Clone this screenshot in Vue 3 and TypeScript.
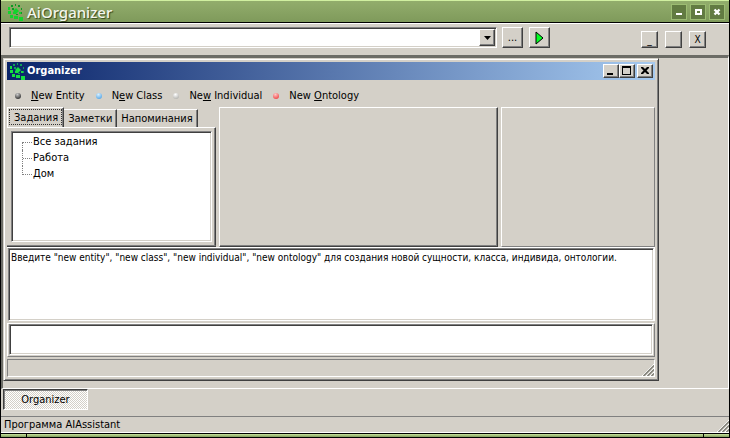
<script setup lang="ts">
import { ref } from 'vue'

interface MenuEntry { before: string; key: string; after: string; tone: string }

const entries: MenuEntry[] = [
  { before: '', key: 'N', after: 'ew Entity', tone: 'dark' },
  { before: 'N', key: 'e', after: 'w Class', tone: 'blue' },
  { before: 'Ne', key: 'w', after: ' Individual', tone: 'pale' },
  { before: 'New ', key: 'O', after: 'ntology', tone: 'red' },
]
const tabs: string[] = ['Задания', 'Заметки', 'Напоминания']
const activeTab = ref(0)
const tasks: string[] = ['Все задания', 'Работа', 'Дом']
const address = ref('')
const command = ref('')
const log = ref('Введите "new entity", "new class", "new individual", "new ontology" для создания новой сущности, класса, индивида, онтологии.')
</script>

<template>
  <div class="frame">
    <header class="titlebar">
      <svg class="logo" viewBox="0 0 18 18" aria-hidden="true">
        <path fill="#12d42c" d="M3 4h2v3H3zM3 8h3v3H3zM5 12h3v3H5zM9 13h4v3H9zM14 14h4v4h-4zM11 5l3 3-3 3-3-3zM14 9h2v2h-2zM8 9h2v2H8z" />
        <path fill="#0d9a22" d="M6 2h2v2H6zM10 1h1v2h-1zM13 2h2v2h-2zM16 5h1v2h-1zM7 5h2v2H7zM16 9h1v2h-1zM11 11h2v1h-2z" />
      </svg>
      <h1>AiOrganizer</h1>
      <div class="wm">
        <button type="button" aria-label="Minimize"><svg viewBox="0 0 14 14"><path d="M4 8h6v2H4z" fill="#fff" /></svg></button>
        <button type="button" aria-label="Maximize"><svg viewBox="0 0 14 14"><path d="M5 5h5v4H5z" fill="none" stroke="#fff" stroke-width="2" /></svg></button>
        <button type="button" aria-label="Close"><svg viewBox="0 0 14 14"><path d="M4.500 4.500l5 5M9.500 4.500l-5 5" stroke="#fff" stroke-width="2.400" /></svg></button>
      </div>
    </header>

    <div class="toolbar">
      <div class="combo">
        <input v-model="address" type="text" aria-label="Address">
        <button type="button" class="raised drop" aria-label="Open list"><svg viewBox="0 0 7 4"><path d="M0 0h7L3.500 4z" /></svg></button>
      </div>
      <button type="button" class="raised tool">...</button>
      <button type="button" class="raised tool" aria-label="Run"><svg class="play" viewBox="0 0 9 14"><path d="M1 1l7 6-7 6z" fill="#0f2" stroke="#000" /></svg></button>
      <div class="child-controls">
        <button type="button" class="raised">_</button>
        <button type="button" class="raised" aria-label="Restore" />
        <button type="button" class="raised">X</button>
      </div>
    </div>

    <main class="workspace">
      <section class="window">
        <header class="caption">
          <svg class="logo" viewBox="0 0 18 18" aria-hidden="true">
            <path fill="#14e040" d="M3 4h2v3H3zM3 8h3v3H3zM5 12h3v3H5zM9 13h4v3H9zM14 14h4v4h-4zM11 5l3 3-3 3-3-3zM14 9h2v2h-2zM8 9h2v2H8z" />
            <path fill="#10a058" d="M6 2h2v2H6zM10 1h1v2h-1zM13 2h2v2h-2zM16 5h1v2h-1zM7 5h2v2H7zM16 9h1v2h-1zM11 11h2v1h-2z" />
          </svg>
          <h2>Organizer</h2>
          <div class="caption-buttons">
            <button type="button" class="raised" aria-label="Minimize"><svg viewBox="0 0 12 10"><path d="M2 7h6v2H2z" /></svg></button>
            <button type="button" class="raised" aria-label="Maximize"><svg viewBox="0 0 12 10"><path fill-rule="evenodd" d="M1 0h9v9H1zM2 2v6h7V2z" /></svg></button>
            <button type="button" class="raised close" aria-label="Close"><svg viewBox="0 0 12 10"><path d="M2 1h2l2 2 2-2h2v1L7.500 4.500 10 7v1H8L6 6 4 8H2V7l2.500-2.500L2 2z" /></svg></button>
          </div>
        </header>

        <nav class="menu">
          <button v-for="e in entries" :key="e.key" type="button">
            <i class="dot" :class="e.tone" /><span>{{ e.before }}<u>{{ e.key }}</u>{{ e.after }}</span>
          </button>
        </nav>

        <div class="panels">
          <div class="panel tasks">
            <div class="tabs" role="tablist">
              <button v-for="(t, i) in tabs" :key="t" type="button" role="tab" :aria-selected="i === activeTab" :class="{ active: i === activeTab }" @click="activeTab = i">{{ t }}</button>
            </div>
            <div class="page">
              <ul class="tree">
                <li v-for="t in tasks" :key="t">{{ t }}</li>
              </ul>
            </div>
          </div>
          <div class="panel middle" />
          <div class="panel side" />
        </div>

        <div class="log"><textarea v-model="log" aria-label="Log" readonly /></div>
        <div class="command"><input v-model="command" type="text" aria-label="Command"></div>
        <div class="window-status"><svg class="grip" viewBox="0 0 12 12"><path d="M0 12L12 0M4 12l8-8M8 12l4-4" stroke="#fff" /><path d="M1.500 12L12 1.500M5.500 12L12 5.500M9.500 12L12 9.500" stroke="#808078" stroke-width="1.500" /></svg></div>
      </section>
    </main>

    <div class="taskbar"><button type="button">Organizer</button></div>
    <footer class="status"><span>Программа AIAssistant</span><svg class="grip" viewBox="0 0 12 12"><path d="M0 12L12 0M4 12l8-8M8 12l4-4" stroke="#fff" /><path d="M1.500 12L12 1.500M5.500 12L12 5.500M9.500 12L12 9.500" stroke="#808078" stroke-width="1.500" /></svg></footer>
    <div class="edge"><i /><i /><i /></div>
  </div>
</template>

<style>
body { background: #d4d0c8; }
</style>

<style scoped>
* { box-sizing: border-box; }
button, input, textarea { font: inherit; color: inherit; padding: 0; margin: 0; border-radius: 0; outline: none; }
h1, h2, ul { margin: 0; padding: 0; }
svg { display: block; }

.frame {
  display: flex; flex-direction: column; min-height: 100vh;
  border: solid #000; border-width: 0 1px;
  background: #d4d0c8; color: #000;
  font: 11px/16px "DejaVu Sans Condensed", "DejaVu Sans", sans-serif;
}
.titlebar {
  display: flex; align-items: center; height: 23px; padding: 0 4px;
  border-top: 1px solid #d0f0a0; border-bottom: 1px solid #000;
  background: linear-gradient(#92ad6c, #7f9a5b);
}
.logo { width: 18px; height: 18px; flex: none; }
h1 { flex: 1; margin-left: 4px; font: 500 15px/20px "Noto Sans", "Open Sans", sans-serif; color: #f4f6ee; text-shadow: 1px 1px 1px #35471c; }
.wm { display: flex; gap: 3px; }
.wm button { width: 16px; height: 16px; border: 1px solid #9cbc72; background: #627b42; }
.wm svg { width: 14px; height: 14px; }

.raised {
  display: flex; align-items: center; justify-content: center;
  border: 1px solid; border-color: #fff #404040 #404040 #fff;
  background: #d4d0c8; box-shadow: inset -1px -1px #808080;
}
.toolbar { display: flex; align-items: flex-start; height: 32px; padding: 3px 23px 0 8px; border-top: 1px solid #fff; }
.combo {
  display: flex; flex: 1; max-width: 488px; height: 21px; margin-right: 5px;
  border: 1px solid; border-color: #808080 #fff #fff #808080;
  box-shadow: inset 1px 1px #404040, inset -1px -1px #d4d0c8; background: #fff; padding: 1px;
}
.combo input { flex: 1; min-width: 0; border: 0; background: #fff; margin: 1px; }
.drop { width: 16px; height: 17px; }
.drop svg { width: 7px; height: 4px; }
.tool { width: 21px; height: 21px; margin-right: 6px; }
.play { width: 9px; height: 14px; }
.child-controls { display: flex; gap: 7px; margin: 4px 0 0 auto; }
.child-controls button { width: 17px; height: 17px; font-size: 10px; }

.workspace {
  display: flex; flex: 1; padding: 0 69px 7px 0;
  border: solid; border-width: 3px 1px 1px 2px; border-color: #6c6c66 #fff #fff #6c6c66;
}
.window {
  display: flex; flex-direction: column; flex: 1; min-width: 0; padding: 3px;
  border: 1px solid; border-color: #d4d0c8 #404040 #404040 #d4d0c8;
  box-shadow: inset 1px 1px #fff, inset -1px -1px #808080;
}
.caption {
  display: flex; align-items: center; height: 18px; padding-right: 2px;
  background: linear-gradient(90deg, #0a246a, #a6caf0); color: #fff;
}
h2 { flex: 1; margin-left: 2px; font: bold 11px/16px "DejaVu Sans Condensed", "DejaVu Sans", sans-serif; }
.caption-buttons { display: flex; color: #000; }
.caption-buttons button { width: 16px; height: 14px; }
.caption-buttons svg { width: 12px; height: 10px; }
.caption-buttons .close { margin-left: 2px; }

.menu { display: flex; align-items: center; gap: 11px; height: 27px; padding: 4px 8px 0; }
.menu button { display: flex; align-items: center; gap: 10px; border: 0; background: none; white-space: nowrap; }
.dot { width: 6px; height: 6px; border-radius: 3px; }
.dark { background: radial-gradient(circle at 40% 25%, #ccc, #444 70%); }
.blue { background: radial-gradient(circle at 40% 25%, #d8f0ff, #58a8e8 80%); }
.pale { background: radial-gradient(circle at 40% 25%, #fff, #b4b4b0 80%); }
.red { background: radial-gradient(circle at 40% 25%, #ffc8c8, #f04848 80%); }

.panels { display: flex; gap: 3px; height: 140px; }
.panel { border: 1px solid; border-color: #fff #404040 #404040 #fff; box-shadow: inset -1px -1px #808080; }
.tasks { display: flex; flex-direction: column; width: 209px; border-top: 0; border-left: 0; border-right: 0; box-shadow: none; }
.middle { flex: 280; }
.side { flex: 153; border-color: #fff #808080 #808080 #fff; box-shadow: none; }
.tabs { display: flex; align-items: flex-end; height: 20px; }
.tabs button {
  height: 18px; padding: 0 4px; border: solid; border-width: 1px 1px 0 0;
  border-color: #fff #404040; background: #d4d0c8; box-shadow: inset -1px 0 #808080; white-space: nowrap;
}
.tabs .active { height: 20px; padding: 0 5px 0 6px; border-left: 1px solid #fff; outline: 1px dotted #333; outline-offset: -3px; }
.page { display: flex; flex: 1; padding: 3px 3px 3px 4px; border: 1px solid; border-color: #fff #404040 #808080 #fff; border-left: 0; box-shadow: inset -1px 0 #808080; }
.tree {
  flex: 1; padding: 2px 0 0 10px; list-style: none; background: #fff;
  border: 1px solid; border-color: #808080 #fff #fff #808080;
  box-shadow: inset 1px 1px #404040, inset -1px -1px #d4d0c8;
}
.tree li { display: flex; height: 16px; align-items: center; }
.tree li::before { content: ""; width: 10px; height: 16px; border-left: 1px dotted #808080; background: repeating-linear-gradient(90deg, #808080 0 1px, #fff 1px 2px) 0 8px / 100% 1px no-repeat; }
.tree li:first-child::before { height: 8px; align-self: flex-end; background-position: 0 0; }
.tree li:last-child::before { height: 9px; align-self: flex-start; }

.log { display: flex; flex: 1; padding-left: 1px; border: solid #fff; border-width: 1px 1px 0 0; }
textarea, .command input {
  flex: 1; min-width: 0; border: 1px solid; border-color: #808080 #fff #fff #808080; background: #fff;
  box-shadow: inset 1px 1px #404040, inset -1px -1px #d4d0c8;
}
textarea { resize: none; padding: 1px 2px; font-size: 10px; }
.command { display: flex; height: 34px; margin-top: 2px; padding: 0 1px 1px; border: 1px solid; border-color: #fff #808080 #808080 #fff; }
.window-status { display: flex; justify-content: flex-end; align-items: flex-end; height: 18px; margin-top: 2px; border: 1px solid; border-color: #808080 #fff #fff #808080; }
.grip { width: 12px; height: 12px; fill: none; }

.taskbar { height: 27px; padding-left: 2px; }
.taskbar button {
  width: 85px; height: 21px; border: 1px solid; border-color: #404040 #fff #fff #404040; box-shadow: inset 1px 1px #808080;
  background: repeating-conic-gradient(#fff 0 25%, #d4d0c8 0 50%) 0 0 / 2px 2px;
}
.status { display: flex; justify-content: space-between; align-items: flex-end; height: 17px; padding-left: 3px; border-top: 1px solid #808080; border-bottom: 1px solid #fff; line-height: 14px; }
.edge { display: flex; gap: 1px; height: 5px; padding: 1px 0; background: #000; }
.edge i { width: 25px; background: linear-gradient(#c8e49c, #7f9a5b); }
.edge i:nth-child(2) { flex: 1; }
</style>
